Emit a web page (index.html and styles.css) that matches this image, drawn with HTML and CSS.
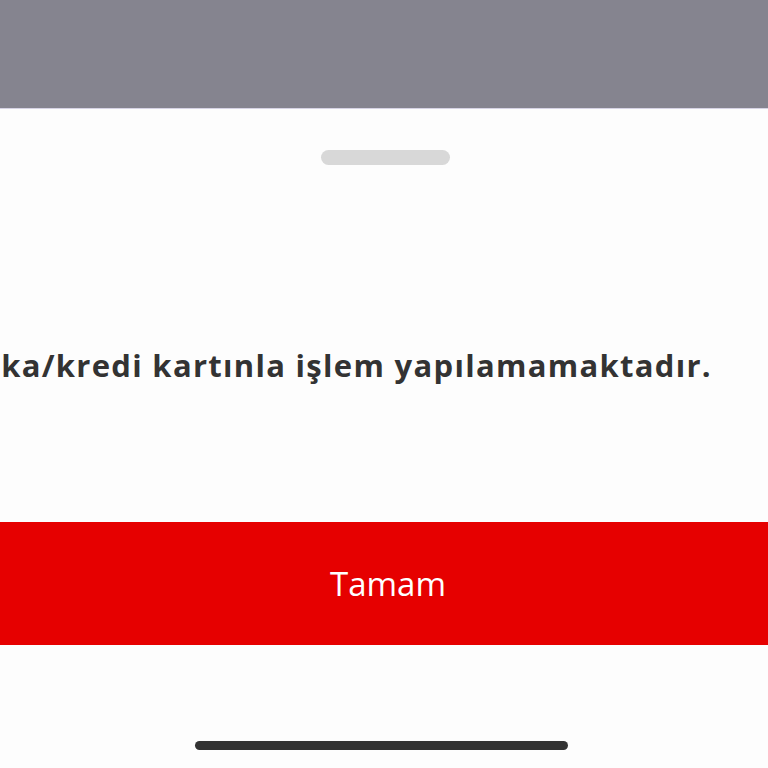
FILE: index.html
```html
<!DOCTYPE html>
<html lang="tr">
<head>
  <meta charset="UTF-8">
  <meta name="viewport" content="width=device-width, initial-scale=1.0">
  <title>Kart İşlemi</title>
  <link rel="stylesheet" href="styles.css">
</head>
<body>
  <div class="backdrop"></div>

  <div class="sheet">
    <div class="grabber"></div>

    <div class="message">
      <p>Banka/kredi kartınla işlem yapılamamaktadır.</p>
    </div>

    <button class="btn-ok">Tamam</button>

    <div class="home-bar"></div>
  </div>
</body>
</html>
```

FILE: styles.css
```css
html, body {
  margin: 0;
  height: 100%;
}
body {
  font-family: "Open Sans", "Noto Sans", sans-serif;
  background: #fdfdfd;
  overflow: hidden;
}
.backdrop {
  height: 108px;
  background: #85848f;
  border-bottom: 1px solid #d6d3e4;
}
.sheet {
  display: flex;
  flex-direction: column;
  align-items: center;
  background: #fdfdfd;
}
.grabber {
  width: 129px;
  height: 15px;
  margin-top: 41px;
  margin-left: 2px;
  border-radius: 8px;
  background: #d8d8d8;
}
/* long sentence is pinned to the right edge and runs out on the left */
.message {
  align-self: stretch;
  display: flex;
  justify-content: flex-end;
  padding-right: 56px;
  margin-top: 180px;
  height: 40px;
}
.message p {
  margin: 0;
  white-space: nowrap;
  font-size: 31px;
  line-height: 40px;
  font-weight: 700;
  color: #333333;
  letter-spacing: 1.3px;
}
.btn-ok {
  align-self: stretch;
  height: 123px;
  margin-top: 137px;
  border: none;
  background: #e60000;
  color: #ffffff;
  font-family: "Open Sans", "Noto Sans", sans-serif;
  font-size: 33px;
  font-weight: 400;
  padding: 0 0 0 8px;
}
.home-bar {
  width: 373px;
  height: 9px;
  margin-top: 96px;
  margin-left: -5px;
  border-radius: 5px;
  background: #333333;
}
```
